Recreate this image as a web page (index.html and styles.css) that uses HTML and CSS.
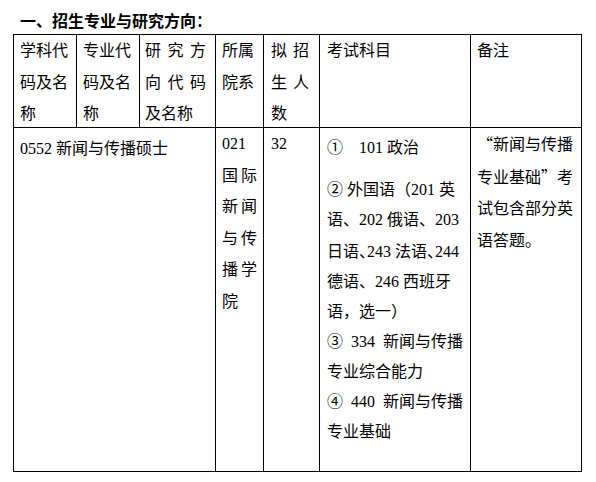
FILE: index.html
```html
<!DOCTYPE html>
<html lang="zh-CN">
<head>
<meta charset="utf-8">
<title>招生专业与研究方向</title>
<link rel="stylesheet" href="styles.css">
</head>
<body>
<div class="page">
  <h1 class="title">一、招生专业与研究方向：</h1>
  <div class="grid">
    <div class="cell head c1">学科代码及名称</div>
    <div class="cell head c2">专业代码及名称</div>
    <div class="cell head c3"><div class="jl">研究方</div><div class="jl">向代码</div><div>及名称</div></div>
    <div class="cell head c4">所属院系</div>
    <div class="cell head c5"><div class="jl">拟招</div><div class="jl">生人</div><div>数</div></div>
    <div class="cell head c6">考试科目</div>
    <div class="cell head c7">备注</div>

    <div class="cell body major">0552 新闻与传播硕士</div>
    <div class="cell body dept">
      <div>021</div>
      <div class="jl">国际</div>
      <div class="jl">新闻</div>
      <div class="jl">与传</div>
      <div class="jl">播学</div>
      <div>院</div>
    </div>
    <div class="cell body quota">32</div>
    <div class="cell body exam">
      <div class="line first">①    101 政治</div>
      <div class="line">② 外国语（201 英</div>
      <div class="line">语、202 俄语、203</div>
      <div class="line">日语<span class="half">、</span>243 法语<span class="half">、</span>244</div>
      <div class="line">德语、246 西班牙</div>
      <div class="line">语，选一）</div>
      <div class="line">③  334  新闻与传播</div>
      <div class="line">专业综合能力</div>
      <div class="line">④  440  新闻与传播</div>
      <div class="line">专业基础</div>
    </div>
    <div class="cell body note">
      <div class="line"><span class="q">“</span>新闻与传播</div>
      <div class="line">专业基础<span class="q">”</span>考</div>
      <div class="line">试包含部分英</div>
      <div class="line">语答题。</div>
    </div>
  </div>
</div>
</body>
</html>
```

FILE: styles.css
```css
html, body {
  margin: 0;
  padding: 0;
  background: #ffffff;
}

.page {
  padding: 8px 0 0 13px;
  color: #000000;
  font-family: "Liberation Serif", "Noto Sans CJK SC", serif;
  font-size: 16px;
}

.title {
  margin: 0 0 2px 0;
  padding-left: 7px;
  font-family: "Noto Sans CJK SC", sans-serif;
  font-size: 16px;
  font-weight: bold;
  line-height: 24px;
}

.grid {
  display: grid;
  grid-template-columns: 63px 63px 76px 48px 56px 151px 111px;
  grid-template-rows: 93px 344px;
  width: max-content;
  border-top: 1px solid #000;
  border-left: 1px solid #000;
}

.cell {
  box-sizing: border-box;
  border-right: 1px solid #000;
  border-bottom: 1px solid #000;
  line-height: 31.5px;
  padding: 0 6px;
}

.jl {
  text-align: justify;
  text-align-last: justify;
}

.c3 {
  padding: 0 9px 0 5px;
}

.c5 {
  padding: 0 10px 0 7px;
}

.c6 {
  padding-left: 7px;
}

.major {
  grid-column: span 3;
  padding-top: 5px;
}

.quota {
  padding-left: 7px;
}

.exam {
  padding: 5px 0 0 7px;
  line-height: 30px;
}

.exam .line,
.note .line {
  white-space: pre;
}

.exam .first {
  margin-bottom: 12px;
}

.half {
  font-family: "Noto Sans CJK SC", sans-serif;
  font-feature-settings: "halt";
}

.q {
  font-family: "Noto Sans CJK SC", sans-serif;
  font-feature-settings: "fwid";
}
```
